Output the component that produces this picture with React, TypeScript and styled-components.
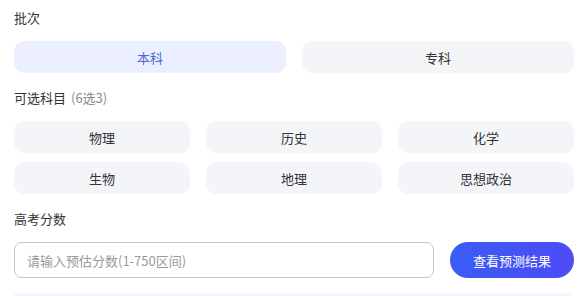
import styled, {createGlobalStyle} from "styled-components";
import React, {useState} from "react";

const GlobalStyle = createGlobalStyle`
  html, body {
    margin: 0;
    padding: 0;
    background: #ffffff;
  }
  body {
    font-family: "Noto Sans CJK SC", "Noto Sans", "Liberation Sans", sans-serif;
    color: #333333;
  }
  * {
    box-sizing: border-box;
  }
`

const Wrapper = styled.div`
  width: 586px;
  height: 296px;
  overflow: hidden;
  padding: 8px 12px 0 14px;
  display: flex;
  flex-direction: column;
  gap: 15px;
`
const Section = styled.section`
  display: flex;
  flex-direction: column;
  gap: 13px;
`
const Label = styled.div`
  height: 20px;
  line-height: 20px;
  font-size: 13px;
  color: #333333;
`
const Hint = styled.span`
  color: #8a8a8a;
  margin-left: 5px;
`
const OptionGrid = styled.div<{ $cols: number }>`
  display: grid;
  grid-template-columns: repeat(${p => p.$cols}, 1fr);
  column-gap: 16px;
  row-gap: 9px;
`
const Option = styled.button<{ $active?: boolean }>`
  height: 32px;
  border: none;
  border-radius: 10px;
  font-family: inherit;
  font-size: 13px;
  cursor: pointer;
  background: ${p => p.$active ? "#ebefff" : "#f4f5f9"};
  color: ${p => p.$active ? "#5064d8" : "#333333"};
`
const ScoreRow = styled.div`
  display: flex;
  gap: 16px;
`
const ScoreInput = styled.input`
  flex: 0 0 420px;
  height: 36px;
  border: 1px solid #c4c6cc;
  border-radius: 8px;
  padding: 0 12px;
  font-family: inherit;
  font-size: 13px;
  color: #333333;
  outline: none;

  &::placeholder {
    color: #9a9a9a;
  }
`
const SubmitButton = styled.button`
  flex: 0 0 124px;
  height: 36px;
  border: none;
  border-radius: 18px;
  background: linear-gradient(90deg, #3a5cf5 0%, #4d4bf6 100%);
  color: #ffffff;
  font-family: inherit;
  font-size: 13px;
  cursor: pointer;
`
const ResultBox = styled.div`
  height: 40px;
  margin-right: 2px;
  border-radius: 8px;
  background: #f5f6fa;
`

const batches = ["本科", "专科"]
const subjects = ["物理", "历史", "化学", "生物", "地理", "思想政治"]

export default function App() {
    const [batch, setBatch] = useState("本科")
    const [picked, setPicked] = useState<string[]>([])
    const [score, setScore] = useState("")
    const toggle = (s: string) => {
        if (picked.includes(s)) setPicked(picked.filter(p => p !== s))
        else if (picked.length < 3) setPicked([...picked, s])
    }
    return <Wrapper>
        <GlobalStyle/>
        <Section>
            <Label>批次</Label>
            <OptionGrid $cols={2}>
                {batches.map(b =>
                    <Option key={b} $active={batch === b} onClick={() => setBatch(b)}>{b}</Option>
                )}
            </OptionGrid>
        </Section>
        <Section>
            <Label>可选科目<Hint>(6选3)</Hint></Label>
            <OptionGrid $cols={3}>
                {subjects.map(s =>
                    <Option key={s} $active={picked.includes(s)} onClick={() => toggle(s)}>{s}</Option>
                )}
            </OptionGrid>
        </Section>
        <Section>
            <Label>高考分数</Label>
            <ScoreRow>
                <ScoreInput
                    value={score}
                    onChange={(e: React.ChangeEvent<HTMLInputElement>) => setScore(e.target.value)}
                    placeholder="请输入预估分数(1-750区间)"
                />
                <SubmitButton>查看预测结果</SubmitButton>
            </ScoreRow>
        </Section>
        <ResultBox/>
    </Wrapper>
}
